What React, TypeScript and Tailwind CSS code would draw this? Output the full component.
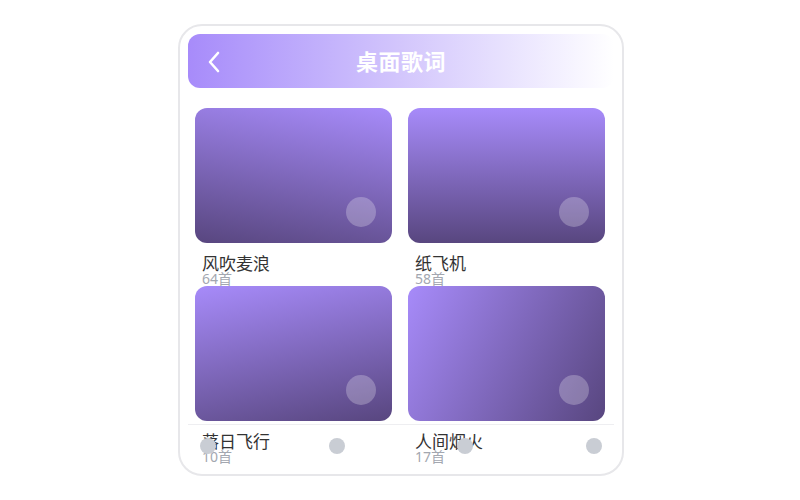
import React from "react";

type Lyric = { name: string; count: string; bg: string };

const lyrics: Lyric[] = [
  { name: "风吹麦浪", count: "64首", bg: "bg-[linear-gradient(190deg,#a78bfa_0%,#58467f_100%)]" },
  { name: "纸飞机", count: "58首", bg: "bg-[linear-gradient(180deg,#a78bfa_0%,#58467f_100%)]" },
  { name: "落日飞行", count: "10首", bg: "bg-[linear-gradient(168deg,#a78bfa_0%,#58467f_100%)]" },
  { name: "人间烟火", count: "17首", bg: "bg-[linear-gradient(118deg,#a78bfa_0%,#58467f_100%)]" },
];

function LyricCard({ item }: { item: Lyric }) {
  return (
    <div className="flex flex-col">
      <div className={`relative h-[135px] rounded-xl ${item.bg}`}>
        <span className="absolute bottom-4 right-4 w-[30px] h-[30px] rounded-full bg-white/25"></span>
      </div>
      <div className="mt-3 px-[7px]">
        <div className="text-[17px] leading-[17px] text-[#333333]">{item.name}</div>
        <div className="text-[14px] leading-[14px] text-[#a3a7b0]">{item.count}</div>
      </div>
    </div>
  );
}

export default function App() {
  return (
    <div
      className="w-[800px] h-[500px] bg-white flex items-start justify-center pt-6"
      style={{ fontFamily: "'Noto Sans', 'Noto Sans CJK SC', sans-serif" }}
    >
      <div className="relative ml-[2px] w-[446px] h-[452px] rounded-[24px] border-2 border-[#e7e7ea] bg-white p-2 overflow-hidden">
        {/* Header */}
        <div className="relative h-[54px] rounded-xl bg-gradient-to-r from-[#a78bfa] via-[#d3c6fc] to-white flex items-center justify-center">
          <svg className="absolute left-[19px] top-[17px]" width="14" height="22" viewBox="0 0 14 22" fill="none">
            <path d="M11 2 L3 11 L11 20" stroke="white" strokeWidth="2.6" strokeLinecap="round" strokeLinejoin="round" />
          </svg>
          <h1 className="text-[22px] font-bold text-white tracking-wide">桌面歌词</h1>
        </div>

        {/* Grid */}
        <div className="mt-5 ml-[7px] mr-[9px] grid grid-cols-2 gap-x-4">
          {lyrics.map((item) => (
            <LyricCard key={item.name} item={item} />
          ))}
        </div>

        {/* Bottom nav */}
        <div className="absolute left-2 right-2 bottom-2 h-[42px] border-t border-[#eeeef1] flex items-center justify-between px-3">
          <span className="w-4 h-4 rounded-full bg-[#c9cdd4]"></span>
          <span className="w-4 h-4 rounded-full bg-[#c9cdd4]"></span>
          <span className="w-4 h-4 rounded-full bg-[#c9cdd4]"></span>
          <span className="w-4 h-4 rounded-full bg-[#c9cdd4]"></span>
        </div>
      </div>
    </div>
  );
}
